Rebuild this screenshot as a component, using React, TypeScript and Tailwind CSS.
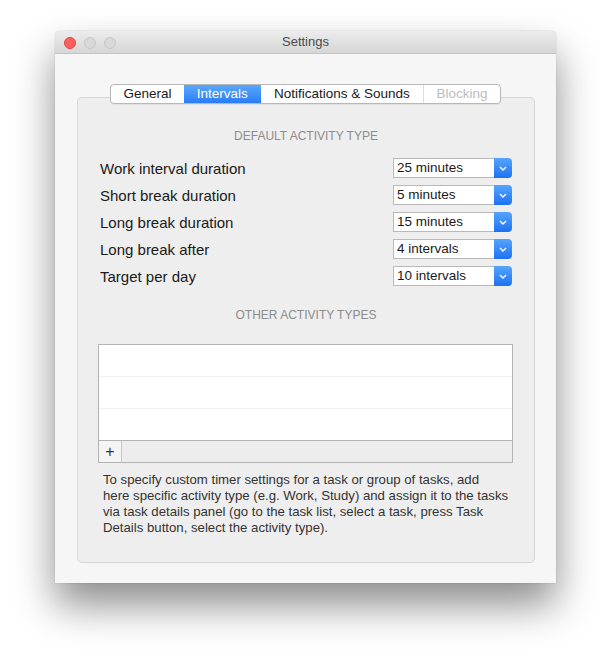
import React from "react";

const rows = [
  { label: "Work interval duration", value: "25 minutes" },
  { label: "Short break duration", value: "5 minutes" },
  { label: "Long break duration", value: "15 minutes" },
  { label: "Long break after", value: "4 intervals" },
  { label: "Target per day", value: "10 intervals" },
];

const font = { fontFamily: '"Liberation Sans", Arial, sans-serif' };

function Popup({ value }: { value: string }) {
  return (
    <div className="flex h-[20px] w-[119px]">
      <div className="flex flex-1 items-center border border-r-0 border-[#b9b9b9] bg-white pl-[3px] text-[13.5px] text-[#1a1a1a]">
        {value}
      </div>
      <div className="flex w-[18px] items-center justify-center rounded-r-[4px] bg-gradient-to-b from-[#54a5fd] to-[#1c71f4]">
        <svg width="8" height="5" viewBox="0 0 8 5">
          <path d="M1 1 L4 4 L7 1" stroke="white" strokeWidth="1.4" fill="none" />
        </svg>
      </div>
    </div>
  );
}

function Tabs() {
  return (
    <div className="relative z-10 mx-auto flex h-[20px] w-[391px] overflow-hidden rounded-[4px] border border-[#b8b8b8] bg-white text-[13.5px] shadow-[0_1px_1px_rgba(0,0,0,0.06)]">
      <div className="flex w-[73px] items-center justify-center text-[#1a1a1a]">General</div>
      <div className="flex w-[77px] items-center justify-center bg-gradient-to-b from-[#5aa8fd] to-[#2a7cf6] text-white">
        Intervals
      </div>
      <div className="flex w-[163px] items-center justify-center text-[#1a1a1a]">
        Notifications &amp; Sounds
      </div>
      <div className="flex w-[77px] items-center justify-center border-l border-[#dcdcdc] text-[#bdbdbd]">
        Blocking
      </div>
    </div>
  );
}

export default function App() {
  return (
    <div className="h-[664px] w-[612px] bg-white pl-[55px] pt-[31px]" style={font}>
      <div className="flex h-[552px] w-[501px] flex-col overflow-hidden rounded-t-[5px] bg-[#f6f6f6] shadow-[0_22px_40px_rgba(0,0,0,0.45),0_0_1px_rgba(0,0,0,0.45)]">
        {/* title bar */}
        <div className="relative flex h-[23px] items-center justify-center border-b border-[#c4c4c4] bg-gradient-to-b from-[#ececec] to-[#d6d6d6]">
          <div className="absolute left-[9px] top-[6px] flex gap-[8px]">
            <div className="h-[12px] w-[12px] rounded-full border border-[#e0443e] bg-[#fc615d]" />
            <div className="h-[12px] w-[12px] rounded-full border border-[#c6c6c6] bg-[#d9d9d9]" />
            <div className="h-[12px] w-[12px] rounded-full border border-[#c6c6c6] bg-[#d9d9d9]" />
          </div>
          <span className="text-[13px] text-[#4a4a4a]">Settings</span>
        </div>

        <div className="pt-[30px]">
          <Tabs />
          <div className="ml-[22px] mt-[-7px] h-[466px] w-[458px] rounded-[5px] border border-[#d6d6d6] bg-[#eeeeee]">
            <div className="pt-[31px] text-center text-[12px] leading-[14px] text-[#8c8c8c]">
              DEFAULT ACTIVITY TYPE
            </div>
            <div className="mt-[15px] flex flex-col gap-[7px] px-[22px]">
              {rows.map((r) => (
                <div key={r.label} className="flex h-[20px] items-center justify-between">
                  <span className="pt-[2px] text-[15px] text-[#1a1a1a]">{r.label}</span>
                  <Popup value={r.value} />
                </div>
              ))}
            </div>
            <div className="mt-[22px] text-center text-[12px] leading-[14px] text-[#8c8c8c]">
              OTHER ACTIVITY TYPES
            </div>
            <div className="ml-[20px] mt-[22px] w-[415px] border border-[#b3b3b3] bg-white">
              <div className="h-[32px] border-b border-[#efefef]" />
              <div className="h-[32px] border-b border-[#efefef]" />
              <div className="h-[31px]" />
              <div className="flex h-[22px] border-t border-[#b3b3b3] bg-[#ededed]">
                <div className="flex w-[23px] items-center justify-center border-r border-[#c8c8c8] bg-[#f4f4f4] text-[16px] leading-none text-[#333]">
                  +
                </div>
              </div>
            </div>
            <div className="ml-[25px] mt-[9px] text-[13.2px] leading-[16px] text-[#333333]">
              <div>To specify custom timer settings for a task or group of tasks, add</div>
              <div>here specific activity type (e.g. Work, Study) and assign it to the tasks</div>
              <div>via task details panel (go to the task list, select a task, press Task</div>
              <div>Details button, select the activity type).</div>
            </div>
          </div>
        </div>
      </div>
    </div>
  );
}
